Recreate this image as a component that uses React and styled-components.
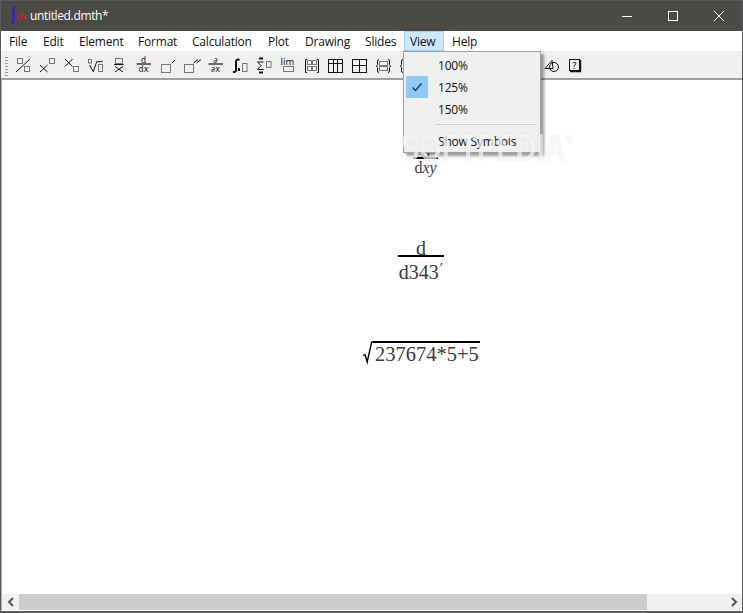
import React from "react";
import styled, { createGlobalStyle } from "styled-components";

const Global = createGlobalStyle`
  html, body { margin: 0; padding: 0; overflow: hidden; background: #fff; }
  * { box-sizing: border-box; }
`;

const UI = `"Open Sans", "Noto Sans", sans-serif`;

const Win = styled.div`
  position: relative;
  width: 743px;
  height: 613px;
  display: flex;
  flex-direction: column;
  background: #fff;
  border: 1px solid #5a5a5a;
  border-bottom-width: 2px;
  font-family: ${UI};
  font-size: 12px;
  color: #111;
  overflow: hidden;
`;
const TitleBar = styled.div`
  height: 30px;
  flex: none;
  display: flex;
  align-items: center;
  background: #4b4a47;
  color: #fff;
  padding-left: 8px;
`;
const TitleText = styled.span`
  margin: 0 0 2px 3px;
  font-size: 12px;
  letter-spacing: -0.35px;
  flex: 1;
`;
const WinButton = styled.div`
  width: 46px;
  height: 30px;
  display: flex;
  align-items: center;
  justify-content: center;
`;
const MenuBar = styled.div`
  height: 21px;
  flex: none;
  display: flex;
  background: #fff;
  border-bottom: 1px solid #f0f0f0;
`;
const MenuItem = styled.div`
  position: relative;
  width: ${(p) => p.$w}px;
  height: 20px;
  padding-left: ${(p) => p.$pad ?? 0}px;
  line-height: 22px;
  letter-spacing: -0.2px;
  white-space: nowrap;
  background: ${(p) => (p.$open ? "#cce8ff" : "transparent")};
  outline: ${(p) => (p.$open ? "1px solid #99d1ff" : "none")};
  outline-offset: -1px;
`;
const Dropdown = styled.div`
  position: absolute;
  left: -1px;
  top: 20px;
  width: 138px;
  height: 102px;
  padding: 2px 3px 0 2px;
  background: #f0f0f0;
  border: 1px solid #a0a0a0;
  box-shadow: 3px 3px 3px rgba(0, 0, 0, 0.4);
  z-index: 5;
`;
const DropItem = styled.div`
  display: flex;
  align-items: center;
  height: 22px;
  letter-spacing: -0.2px;
`;
const DropLabel = styled.span`
  margin-top: 2px;
`;
const CheckCell = styled.div`
  width: 22px;
  height: 22px;
  margin-right: 10px;
  display: flex;
  align-items: center;
  justify-content: center;
  background: ${(p) => (p.$on ? "#90c8f6" : "transparent")};
`;
const Separator = styled.div`
  height: 1px;
  margin: 4px 0 5px 30px;
  background: #d0d0d0;
`;
const Toolbar = styled.div`
  height: 28px;
  flex: none;
  display: flex;
  align-items: flex-start;
  padding-top: 3px;
  background: #f0f0f0;
  border-bottom: 2px solid #a0a0a0;
`;
const Gripper = styled.div`
  width: 3px;
  height: 20px;
  margin: 1px 3px 0 4px;
  background-image: radial-gradient(#9a9a9a 45%, transparent 50%);
  background-size: 2px 3px;
`;
const ToolButton = styled.div`
  width: 24px;
  height: 22px;
  flex: none;
`;
const Canvas = styled.div`
  position: relative;
  flex: 1;
  background: #fff;
  font-family: "Liberation Serif", serif;
  color: #3a3a3a;
  border-left: 1px solid #b0b0b0;
`;
const Fraction = styled.div`
  position: absolute;
  left: ${(p) => p.$x}px;
  top: ${(p) => p.$y}px;
  width: ${(p) => p.$w}px;
  display: flex;
  flex-direction: column;
  align-items: center;
  font-size: ${(p) => p.$size}px;
  line-height: ${(p) => p.$size + 2}px;
`;
const Numerator = styled.div`
  height: ${(p) => p.$size + 2}px;
  padding-top: ${(p) => p.$drop ?? 0}px;
`;
const Denominator = styled.div`
  padding-top: ${(p) => p.$drop ?? 0}px;
`;
const Bar = styled.div`
  width: 100%;
  height: 2px;
  background: #000;
`;
const Italic = styled.i``;
const Root = styled.div`
  position: absolute;
  left: ${(p) => p.$x}px;
  top: ${(p) => p.$y}px;
  display: flex;
  align-items: flex-start;
`;
const Radicand = styled.div`
  border-top: 2px solid #000;
  margin-left: -1px;
  padding: 0 1px 0 2px;
  font-size: 20.5px;
  line-height: 22px;
  white-space: nowrap;
`;
const Prime = styled.span`
  font-size: 15px;
  line-height: 0;
  vertical-align: 6px;
  margin-left: 1px;
`;
const ScrollBar = styled.div`
  height: 16px;
  flex: none;
  margin-bottom: 1px;
  display: flex;
  align-items: center;
  background: #f0f0f0;
  border-left: 1px solid #b0b0b0;
`;
const ScrollArrow = styled.div`
  width: 17px;
  height: 16px;
  flex: none;
  display: flex;
  align-items: center;
  justify-content: center;
`;
const ScrollThumb = styled.div`
  width: 628px;
  height: 16px;
  background: #cdcdcd;
`;
const ScrollRest = styled.div`
  flex: 1;
`;
const Watermark = styled.div`
  position: absolute;
  left: 399px;
  top: 116px;
  font-family: "Liberation Sans", sans-serif;
  font-weight: 700;
  font-size: 38px;
  line-height: 44px;
  color: rgba(255, 255, 255, 0.7);
  text-shadow: 0 0 2px rgba(0, 0, 0, 0.1);
  transform: scaleX(0.76);
  transform-origin: left center;
  z-index: 6;
  pointer-events: none;
  white-space: nowrap;
`;
const Registered = styled.span`
  font-size: 12px;
  vertical-align: 18px;
`;

const G = ({ children }) => (
  <svg width="24" height="22" viewBox="0 0 24 22" fill="none" stroke="#111" strokeWidth="1">
    {children}
  </svg>
);
const GREY = "#777";
const labelStyle = { fontFamily: "DejaVu Sans, sans-serif", fill: "#111", stroke: "none" };

const DiffIcon = ({ top }) => (
  <>
    <text x="12.5" y="7.5" fontSize="8" textAnchor="middle" style={labelStyle}>{top}</text>
    <path d="M5.5 9H20" strokeWidth="1.2" />
    <text x="12.5" y="17" fontSize="8" textAnchor="middle" style={labelStyle}>{top}x</text>
  </>
);

const icons = [
  <G><rect x="6.5" y="3.5" width="5" height="5" stroke={GREY} /><path d="M5 17L19 4" /><rect x="13.5" y="11.5" width="5" height="5" stroke={GREY} /></G>,
  <G><path d="M5 10l7.5 7M12.5 10L5 17" /><rect x="14.5" y="3.5" width="5" height="5" stroke={GREY} /></G>,
  <G><path d="M6 4l7.5 7.5M13.5 4L6 11.5" /><rect x="14.5" y="11.5" width="5" height="5" stroke={GREY} /></G>,
  <G><rect x="5.5" y="4.5" width="3" height="3.5" stroke={GREY} /><path d="M6.5 10l3.8 6.7 3.4-10h6" /><rect x="15.5" y="9.5" width="4" height="7" stroke={GREY} /></G>,
  <G><rect x="8.5" y="3.5" width="7" height="5" stroke={GREY} /><path d="M7 9.5h9.5M8 11.5l8 5.5M16 11.5L8 17" /></G>,
  <G><DiffIcon top="d" /></G>,
  <G><rect x="6.5" y="9.5" width="9" height="8" stroke={GREY} /><path d="M17 8l3-3" /></G>,
  <G><rect x="5.5" y="9.5" width="9" height="8" stroke={GREY} /><path d="M14.5 8l4.5-3.5M17.5 8L22 4.5" /></G>,
  <G><DiffIcon top="∂" /></G>,
  <G><path d="M12.5 5Q9 3.5 9 7v8q0 2.5-3 2" strokeWidth="2" /><rect x="11" y="13" width="2" height="3" fill="#111" stroke="none" /><rect x="15.5" y="8.5" width="4.5" height="8" stroke={GREY} /></G>,
  <G><path d="M8 3.5h4M8 17.5h4" strokeWidth="2" /><path d="M12.5 7H6.5l3.5 3.5L6.5 14.5h6" /><rect x="15.5" y="6.5" width="4.5" height="6" stroke={GREY} /></G>,
  <G><text x="12.5" y="9.5" fontSize="9" textAnchor="middle" style={labelStyle}>lim</text><rect x="8.5" y="11.5" width="10" height="5" stroke={GREY} /></G>,
  <G><path d="M8 4.5H6.5v13H8M18 4.5h1.5v13H18" /><g stroke={GREY}><rect x="8.5" y="5.5" width="4" height="4" /><rect x="13.5" y="5.5" width="4" height="4" /><rect x="8.5" y="11.5" width="4" height="4" /><rect x="13.5" y="11.5" width="4" height="4" /></g></G>,
  <G><rect x="5.5" y="4.5" width="14" height="13" /><path d="M5.5 8.5h14M10.5 4.5v13M14.5 4.5v13" /></G>,
  <G><rect x="5.5" y="4.5" width="14" height="13" /><path d="M5.5 10.5h14M12.5 4.5v13" /></G>,
  <G><path d="M8 4.5Q6.5 4.5 6.5 6v3.5L5.5 11l1 1.5V16Q6.5 17.5 8 17.5M17 4.5Q18.5 4.5 18.5 6v3.5l1 1.5-1 1.5V16Q18.5 17.5 17 17.5" /><rect x="8.5" y="6.5" width="8" height="4" stroke={GREY} /><rect x="8.5" y="11.5" width="8" height="4" stroke={GREY} /></G>,
  <G><path d="M8 4.5Q6.5 4.5 6.5 6v3.5L5.5 11l1 1.5V16Q6.5 17.5 8 17.5" /></G>,
  <G />, <G />, <G />, <G />, <G />,
  <G><path d="M6 13.5L13 5.5l1 8z" /><circle cx="15" cy="12" r="4.5" /></G>,
  <G><rect x="6.5" y="4.5" width="10" height="11" /><path d="M7 16.5h10.5V5" strokeWidth="1.4" /><text x="11.5" y="13.5" fontSize="9" textAnchor="middle" style={labelStyle}>?</text></G>,
];

const menus = [
  ["File", 42, 8], ["Edit", 36], ["Element", 59], ["Format", 54],
  ["Calculation", 76], ["Plot", 37], ["Drawing", 60], ["Slides", 39],
];

const Check = () => (
  <svg width="12" height="10" viewBox="0 0 12 10" fill="none" stroke="#1f3a55" strokeWidth="1.4">
    <path d="M1.5 5.5l3 3 6-7" />
  </svg>
);

export default function App() {
  return (
    <>
      <Global />
      <Win>
        <TitleBar>
          <svg width="18" height="20" viewBox="0 0 18 20" fill="none">
            <path d="M6 1.5Q4.5 1 4.5 3v12q0 3-2.5 2.5" stroke="#1a1aff" strokeWidth="2" />
            <text x="7" y="14" fontSize="9" fill="#ee1111" fontFamily="DejaVu Sans, sans-serif">dx</text>
          </svg>
          <TitleText>untitled.dmth*</TitleText>
          <WinButton>
            <svg width="12" height="12" viewBox="0 0 12 12"><path d="M1 6.5h10" stroke="#fff" /></svg>
          </WinButton>
          <WinButton>
            <svg width="12" height="12" viewBox="0 0 12 12" fill="none"><rect x="1.5" y="1.5" width="9" height="9" stroke="#fff" /></svg>
          </WinButton>
          <WinButton>
            <svg width="12" height="12" viewBox="0 0 12 12"><path d="M1 1l10 10M11 1L1 11" stroke="#fff" /></svg>
          </WinButton>
        </TitleBar>
        <MenuBar>
          {menus.map(([m, w, pad]) => (
            <MenuItem key={m} $w={w} $pad={pad}>{m}</MenuItem>
          ))}
          <MenuItem $open $w={40} $pad={6}>
            View
            <Dropdown>
              <DropItem><CheckCell /><DropLabel>100%</DropLabel></DropItem>
              <DropItem><CheckCell $on><Check /></CheckCell><DropLabel>125%</DropLabel></DropItem>
              <DropItem><CheckCell /><DropLabel>150%</DropLabel></DropItem>
              <Separator />
              <DropItem><CheckCell /><DropLabel>Show Symbols</DropLabel></DropItem>
            </Dropdown>
          </MenuItem>
          <MenuItem $w={46} $pad={8}>Help</MenuItem>
        </MenuBar>
        <Toolbar>
          <Gripper />
          {icons.map((ic, i) => (
            <ToolButton key={i}>{ic}</ToolButton>
          ))}
        </Toolbar>
        <Canvas>
          <Fraction $x={411} $y={59} $w={25} $size={16}>
            <Numerator $size={16}>g</Numerator>
            <Bar />
            <Denominator>d<Italic>xy</Italic></Denominator>
          </Fraction>
          <Fraction $x={396} $y={153} $w={46} $size={20}>
            <Numerator $size={20} $drop={4}>d</Numerator>
            <Bar />
            <Denominator $drop={4}>d343<Prime>′</Prime></Denominator>
          </Fraction>
          <Root $x={360} $y={261}>
            <svg width="12" height="24" viewBox="0 0 12 24" fill="none" stroke="#000">
              <path d="M1 14.5l2-1" strokeWidth="1.2" />
              <path d="M3 13.5l2.2 7.5L9.7 1H12" strokeWidth="1.4" />
            </svg>
            <Radicand>237674*5+5</Radicand>
          </Root>
        </Canvas>
        <ScrollBar>
          <ScrollArrow>
            <svg width="8" height="10" viewBox="0 0 8 10" fill="none" stroke="#555" strokeWidth="2"><path d="M6 1L2 5l4 4" /></svg>
          </ScrollArrow>
          <ScrollThumb />
          <ScrollRest />
          <ScrollArrow>
            <svg width="8" height="10" viewBox="0 0 8 10" fill="none" stroke="#555" strokeWidth="2"><path d="M2 1l4 4-4 4" /></svg>
          </ScrollArrow>
        </ScrollBar>
        <Watermark>SOFTPEDIA<Registered>®</Registered></Watermark>
      </Win>
    </>
  );
}
